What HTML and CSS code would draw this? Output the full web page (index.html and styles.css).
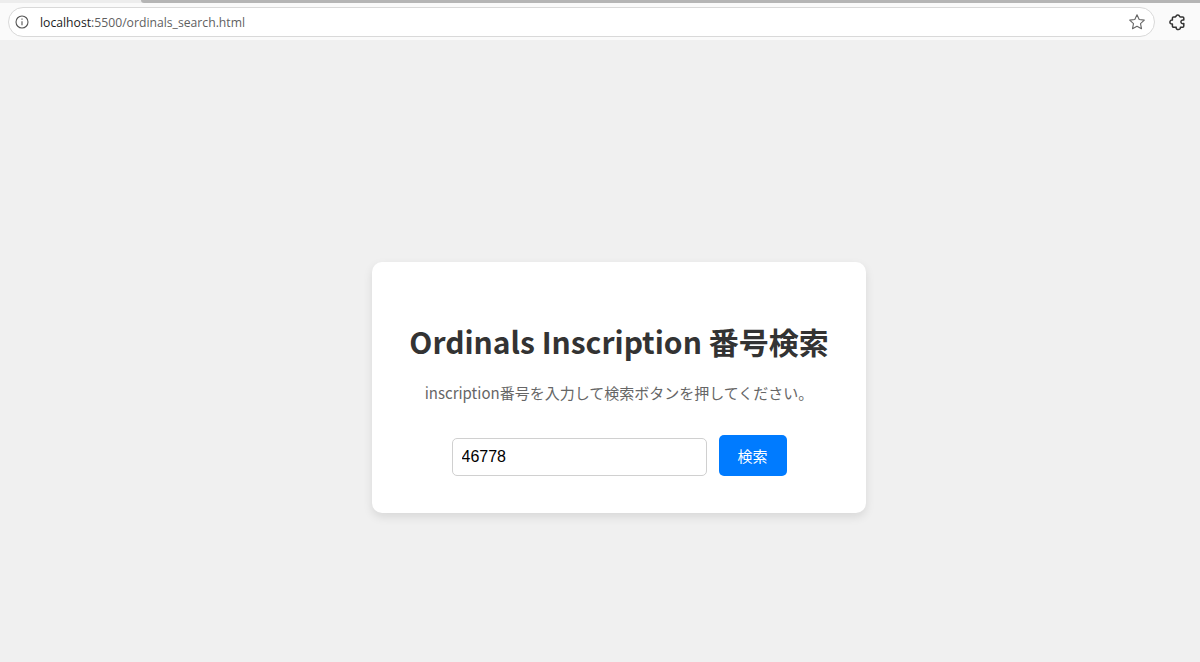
FILE: index.html
```html
<!DOCTYPE html>
<html lang="ja">

<head>
    <meta charset="UTF-8">
    <meta name="viewport" content="width=device-width, initial-scale=1.0">
    <title>Ordinals Inscription 番号検索</title>
    <link rel="stylesheet" href="styles.css">
</head>

<body>
    <div class="tabstrip">
        <div class="tabstrip-dark"></div>
    </div>
    <div class="toolbar">
        <div class="urlbar">
            <svg class="info-icon" width="16" height="16" viewBox="0 0 16 16" fill="none" stroke="#555" stroke-width="1.1">
                <circle cx="8" cy="8" r="6"></circle>
                <path d="M8 7.2v4M8 4.6v1.2"></path>
            </svg>
            <div class="url"><span class="host">localhost</span>:5500/ordinals_search.html</div>
            <svg class="star-icon" width="18" height="18" viewBox="0 0 18 18" fill="none" stroke="#666" stroke-width="1.1" stroke-linejoin="round">
                <path d="M9 1.800l2.200 4.700 5.100.6-3.800 3.500 1 5.100L9 13.200l-4.500 2.500 1-5.100-3.800-3.500 5.100-.6z"></path>
            </svg>
        </div>
        <svg class="ext-icon" width="18" height="18" viewBox="0 0 18 18" fill="none" stroke="#333" stroke-width="1.5" stroke-linejoin="round">
            <path d="M7 3.400c.3-1.600 3-1.900 3.500-.2.1.5.4.7.9.7h2.300c.7 0 1.100.5 1.100 1.100v2.100c-1.700-.5-2.900.4-2.900 1.700s1.300 2.200 2.900 1.700v2.600c0 .7-.5 1.200-1.100 1.200h-2.300c.3 1.500-1 2.400-2.200 2.300-1.200 0-2.300-1-2-2.300H4.600c-.7 0-1.200-.5-1.200-1.200v-2c-1.700.2-2.600-1-2.500-2.100.1-1.100 1-2.200 2.500-1.900V5c0-.6.500-1.100 1.200-1.100h1.500c.3 0 .4-.2.400-.5z"></path>
        </svg>
    </div>

    <main class="page">
        <div class="card">
            <h1>Ordinals Inscription 番号検索</h1>
            <p>inscription番号を入力して検索ボタンを押してください。</p>
            <div class="search">
                <input class="search-input" type="text" value="46778">
                <button class="search-button">検索</button>
            </div>
        </div>
    </main>
</body>

</html>
```
FILE: styles.css
```css
body {
    margin: 0;
    height: 662px;
    display: flex;
    flex-direction: column;
    overflow: hidden;
    background-color: #f0f0f0;
    font-family: "Noto Sans CJK JP", "Noto Sans", sans-serif;
}

.tabstrip {
    height: 3px;
    background-color: #ededed;
    padding-left: 141px;
}

.tabstrip-dark {
    height: 3px;
    background-color: #b5b5b5;
    border-bottom-left-radius: 3px;
}

.toolbar {
    height: 37px;
    display: flex;
    align-items: center;
    gap: 14px;
    padding: 1px 13px 0 8px;
    box-sizing: border-box;
    background-color: #fafafa;
}

.urlbar {
    flex: 1;
    height: 30px;
    display: flex;
    align-items: center;
    gap: 10px;
    padding: 0 8px 0 5px;
    background-color: #fff;
    border: 1px solid #d9d9d9;
    border-radius: 15px;
    box-sizing: border-box;
}

.info-icon {
    flex-shrink: 0;
}

.url {
    flex: 1;
    font-family: "Open Sans", "Noto Sans", sans-serif;
    font-size: 12.2px;
    color: #5f5f5f;
}

.host {
    color: #1c1c1c;
}

.page {
    flex: 1;
    display: flex;
    justify-content: center;
    align-items: flex-start;
    padding: 222px 0 0 38px;
}

.card {
    width: 494px;
    height: 251px;
    box-sizing: border-box;
    padding-top: 56px;
    text-align: center;
    background-color: #fff;
    border-radius: 10px;
    box-shadow: 0 4px 10px rgba(0, 0, 0, 0.1);
}

h1 {
    margin: 0;
    font-size: 30px;
    line-height: 46px;
    font-weight: 700;
    color: #333;
}

p {
    margin: 17px 0 0;
    font-size: 15px;
    line-height: 24px;
    color: #666;
}

.search {
    display: flex;
    justify-content: center;
    align-items: flex-end;
    gap: 12px;
    margin-top: 30px;
}

.search-input {
    width: 255px;
    height: 38px;
    box-sizing: border-box;
    padding: 0 9px;
    font-family: "Liberation Sans", Arial, sans-serif;
    font-size: 16px;
    color: #000;
    border: 1px solid #d0d0d0;
    border-radius: 5px;
}

.search-button {
    width: 68px;
    height: 41px;
    padding: 0;
    font-family: "Noto Sans CJK JP", sans-serif;
    font-size: 15px;
    color: #fff;
    background-color: #007bff;
    border: none;
    border-radius: 5px;
}
```
